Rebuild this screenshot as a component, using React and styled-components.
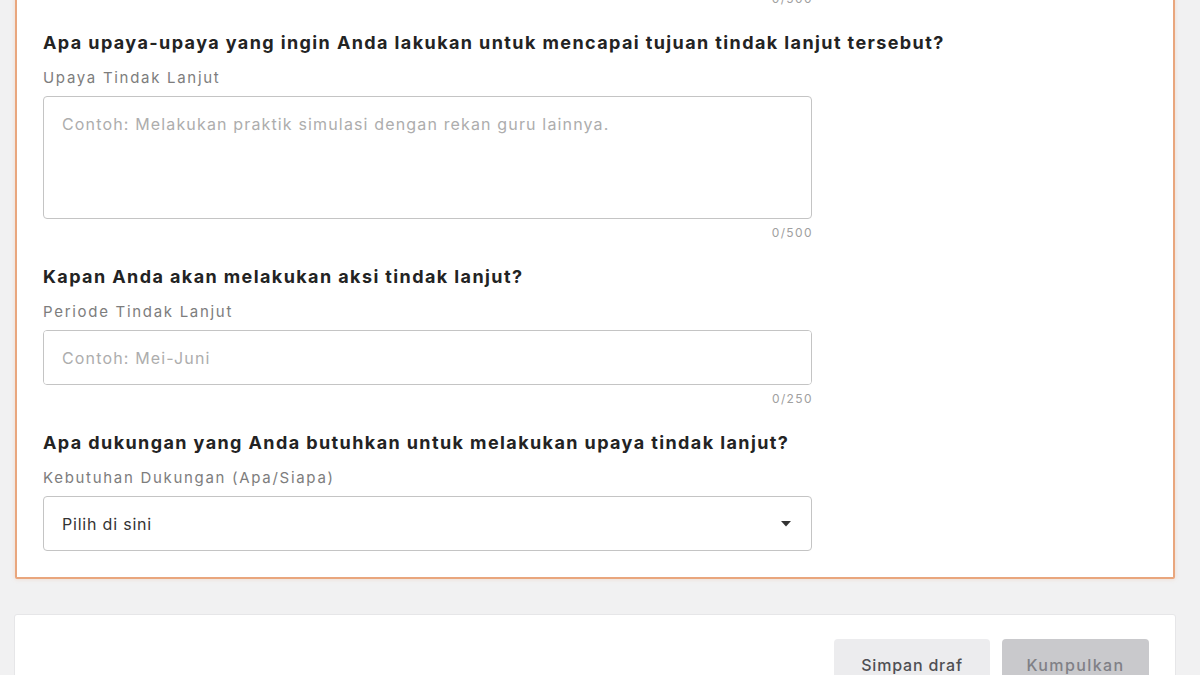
import React from 'react';
import styled, { createGlobalStyle } from 'styled-components';

const GlobalStyle = createGlobalStyle`
  html, body {
    margin: 0;
    padding: 0;
    height: 675px;
    background: #f1f1f2;
    font-family: Inter, "Noto Sans", "Liberation Sans", sans-serif;
    overflow: hidden;
  }
  * { box-sizing: border-box; }
`;

const Page = styled.div`
  width: 1200px;
  padding-left: 15px;
  margin-top: -35px;
`;

const Card = styled.div`
  width: 1160px;
  background: #fff;
  border: 2px solid #e9a67d;
  border-radius: 2px;
  box-shadow: 0 0 4px rgba(234, 167, 126, 0.35);
  padding: 24px 26px 26px;
`;

const Section = styled.div`
  display: flex;
  flex-direction: column;
  width: 769px;
  margin-top: ${({ first }) => (first ? '0' : '24px')};
`;

const Question = styled.h3`
  margin: 0 0 14px;
  width: 1100px;
  font-size: 18px;
  line-height: 24px;
  font-weight: 700;
  color: #232323;
  letter-spacing: 1.4px;
`;

const Label = styled.label`
  font-size: 15px;
  line-height: 18px;
  color: #7d7d7d;
  letter-spacing: 1.7px;
  margin-bottom: 9px;
`;

const TextArea = styled.textarea`
  width: 100%;
  height: ${({ tall }) => (tall ? '123px' : '55px')};
  border: 1px solid #c4c4c4;
  border-radius: 4px;
  padding: 17px 18px;
  font-family: inherit;
  font-size: 16px;
  line-height: 20px;
  letter-spacing: 1.15px;
  color: #333;
  resize: none;
  outline: none;
  &::placeholder {
    color: #adadad;
  }
`;

const Counter = styled.div`
  align-self: flex-end;
  font-size: 12px;
  line-height: 16px;
  letter-spacing: 1.4px;
  margin-right: -1px;
  color: #a0a0a0;
  margin-top: ${({ top }) => (top ? '0' : '6px')};
`;

const SelectBox = styled.div`
  display: flex;
  align-items: center;
  justify-content: space-between;
  height: 55px;
  border: 1px solid #c4c4c4;
  border-radius: 4px;
  padding: 0 20px 0 18px;
  font-size: 16px;
  letter-spacing: 0.8px;
  color: #333;
  cursor: pointer;
`;

const Footer = styled.div`
  display: flex;
  justify-content: flex-end;
  gap: 12px;
  width: 1162px;
  margin: 35px 0 0 -1px;
  background: #fff;
  border: 1px solid #e6e6e8;
  border-radius: 3px;
  padding: 24px 26px;
`;

const Button = styled.button`
  height: 52px;
  padding: 0;
  border: none;
  border-radius: 4px;
  font-family: inherit;
  font-size: 16px;
  font-weight: 500;
  letter-spacing: ${({ primary }) => (primary ? '1.4px' : '0.8px')};
  background: ${({ primary }) => (primary ? '#c9c9cc' : '#ececee')};
  color: ${({ primary }) => (primary ? '#808086' : '#4f4f53')};
  width: ${({ primary }) => (primary ? '147px' : '156px')};
`;

const Caret = () => (
  <svg width="10" height="6" viewBox="0 0 10 6">
    <path d="M0 0 L10 0 L5 5.5 Z" fill="#333" />
  </svg>
);

const Field = ({ question, label, placeholder, tall, max }) => (
  <Section>
    <Question>{question}</Question>
    <Label>{label}</Label>
    <TextArea tall={tall} placeholder={placeholder} />
    <Counter>0/{max}</Counter>
  </Section>
);

export default function App() {
  return (
    <>
      <GlobalStyle />
      <Page>
        <Card>
          <Section first>
            <Counter top>0/500</Counter>
          </Section>
          <Field
            question="Apa upaya-upaya yang ingin Anda lakukan untuk mencapai tujuan tindak lanjut tersebut?"
            label="Upaya Tindak Lanjut"
            placeholder="Contoh: Melakukan praktik simulasi dengan rekan guru lainnya."
            tall
            max={500}
          />
          <Field
            question="Kapan Anda akan melakukan aksi tindak lanjut?"
            label="Periode Tindak Lanjut"
            placeholder="Contoh: Mei-Juni"
            max={250}
          />
          <Section>
            <Question>Apa dukungan yang Anda butuhkan untuk melakukan upaya tindak lanjut?</Question>
            <Label>Kebutuhan Dukungan (Apa/Siapa)</Label>
            <SelectBox>
              <span>Pilih di sini</span>
              <Caret />
            </SelectBox>
          </Section>
        </Card>
        <Footer>
          <Button>Simpan draf</Button>
          <Button primary>Kumpulkan</Button>
        </Footer>
      </Page>
    </>
  );
}
